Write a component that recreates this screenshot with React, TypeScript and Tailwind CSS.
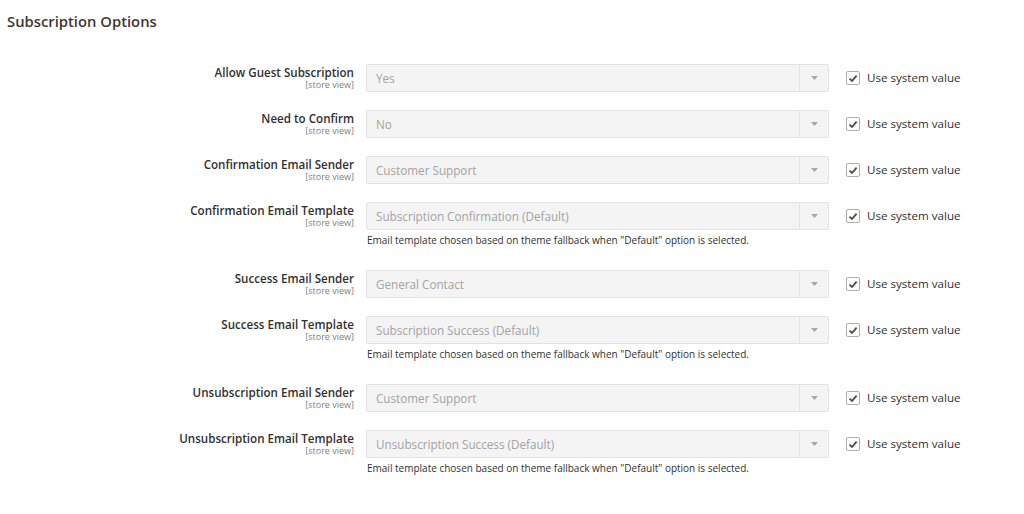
import React from "react";

type Row = { label: string; value: string; note?: boolean };

const rows: Row[] = [
  { label: "Allow Guest Subscription", value: "Yes" },
  { label: "Need to Confirm", value: "No" },
  { label: "Confirmation Email Sender", value: "Customer Support" },
  { label: "Confirmation Email Template", value: "Subscription Confirmation (Default)", note: true },
  { label: "Success Email Sender", value: "General Contact" },
  { label: "Success Email Template", value: "Subscription Success (Default)", note: true },
  { label: "Unsubscription Email Sender", value: "Customer Support" },
  { label: "Unsubscription Email Template", value: "Unsubscription Success (Default)", note: true },
];

function Check() {
  return (
    <div className="w-[14px] h-[14px] border border-[#adadad] rounded-[2px] bg-white flex items-center justify-center">
      <svg width="10" height="9" viewBox="0 0 10 9">
        <path d="M1.5 4.6 L4 7 L8.6 1.6" fill="none" stroke="#514943" strokeWidth="1.8" />
      </svg>
    </div>
  );
}

export default function App() {
  return (
    <div className="w-[1024px] h-[514px] bg-white overflow-hidden" style={{ fontFamily: '"Open Sans", sans-serif' }}>
      <div className="pl-[7px] pt-[11px] text-[14.8px] leading-[20px] font-semibold text-[#41362f]">Subscription Options</div>
      <div className="mt-[33px] flex flex-col">
        {rows.map((r, i) => (
          <div key={i} className={r.note ? "mb-[23px]" : "mb-[18px]"}>
            <div className="flex items-start">
              <div className="w-[354px] text-right pt-[1px]">
                <div className="text-[11.6px] leading-[15px] font-semibold text-[#303030]">{r.label}</div>
                <div className="text-[9px] leading-[10px] text-[#808080]">[store view]</div>
              </div>
              <div className="ml-[12px] w-[463px] h-[28px] bg-[#f4f4f4] border border-[#e3e3e3] rounded-[2px] flex">
                <div className="flex-1 pl-[9px] text-[11.7px] leading-[26px] text-[#a3a3a3]">{r.value}</div>
                <div className="w-[29px] border-l border-[#e3e3e3] flex items-center justify-center">
                  <svg width="7" height="4" viewBox="0 0 7 4">
                    <path d="M0 0 L7 0 L3.5 4 Z" fill="#a8a8a8" />
                  </svg>
                </div>
              </div>
              <div className="ml-[17px] h-[28px] flex items-center">
                <Check />
                <span className="ml-[7px] text-[11.6px] text-[#303030]">Use system value</span>
              </div>
            </div>
            {r.note && (
              <div className="ml-[367px] mt-[3px] text-[10px] leading-[14px] text-[#303030]">
                Email template chosen based on theme fallback when "Default" option is selected.
              </div>
            )}
          </div>
        ))}
      </div>
    </div>
  );
}
